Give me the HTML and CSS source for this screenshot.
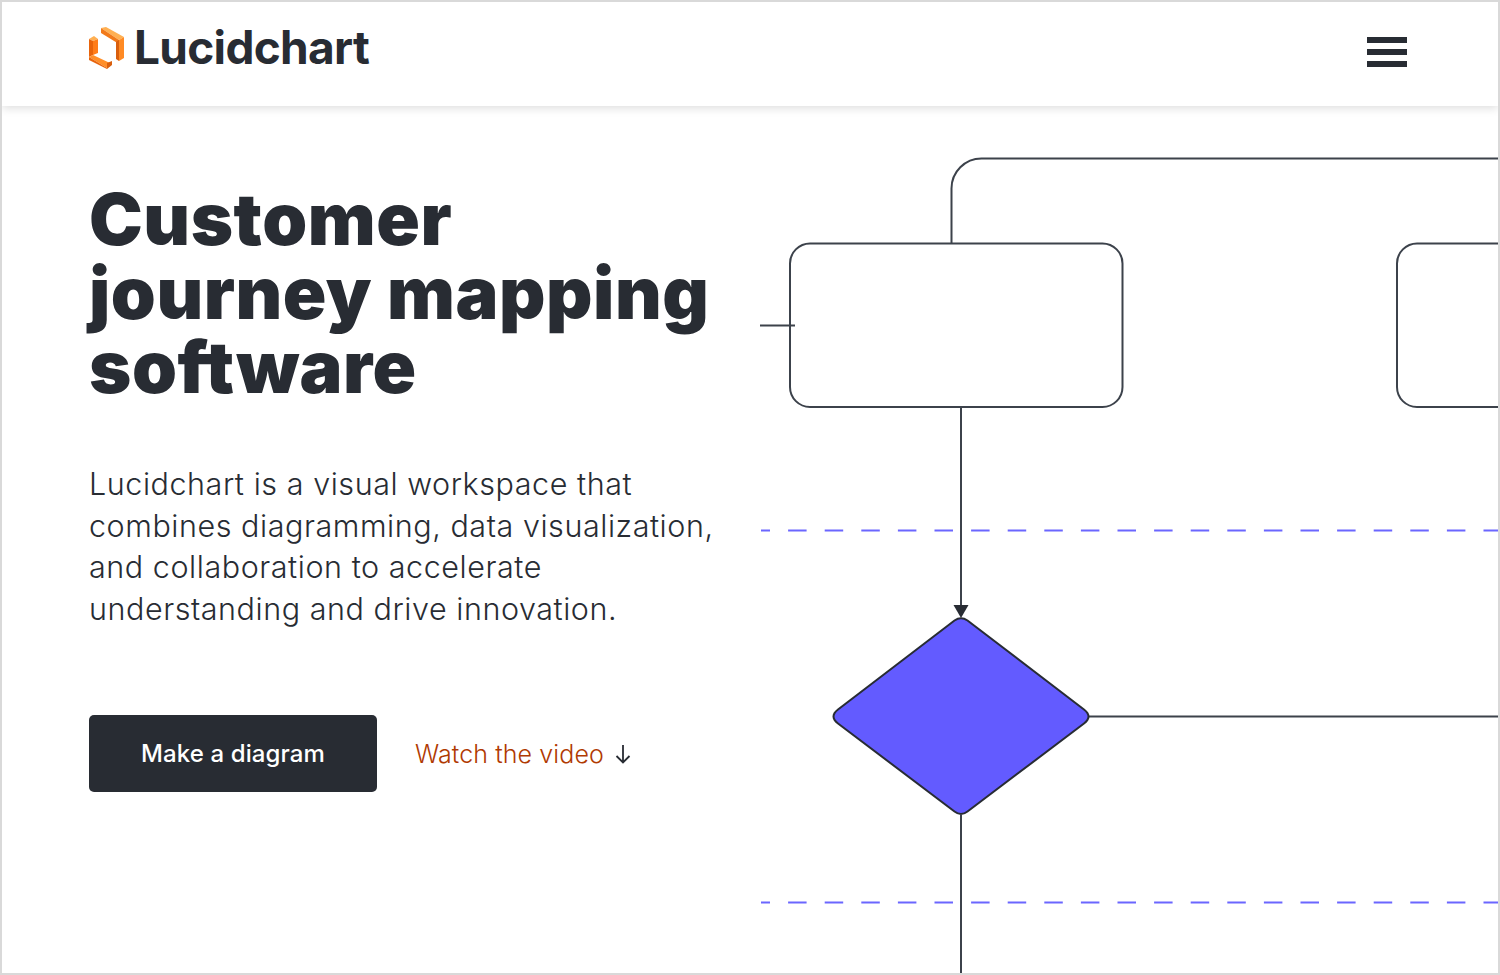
FILE: index.html
```html
<!DOCTYPE html>
<html lang="en">
<head>
<meta charset="utf-8">
<title>Lucidchart</title>
<link rel="stylesheet" href="styles.css">
</head>
<body>
<div class="frame">
  <header class="topbar">
    <a class="brand" href="#">
      <svg class="brand-mark" viewBox="0 0 38 42" width="38" height="42" aria-hidden="true">
        <polygon points="13,1 18,0 36,10 31,13" fill="#ffb052"/>
        <polygon points="13,1 13,6 31,17 31,13" fill="#f27a1a"/>
        <polygon points="31,13 36,10 36,31 31,34" fill="#ff8a24"/>
        <polygon points="31,13 31,34 28,32 28,15" fill="#d95f0e"/>
        <polygon points="1,12 6,9 10,12 5,14" fill="#ffb052"/>
        <polygon points="1,12 5,14 5,28 1,30" fill="#e8640c"/>
        <polygon points="5,14 10,12 10,26 5,28" fill="#ff7d1a"/>
        <polygon points="1,30 5,28 24,37 19,41" fill="#ff8f2a"/>
        <polygon points="1,30 19,41 19,42 1,33" fill="#e8640c"/>
        <polygon points="19,36 24,34 24,38 19,42" fill="#d95f0e"/>
      </svg>
      <span class="brand-name">Lucidchart</span>
    </a>
    <button class="menu" type="button" aria-label="Menu"><span></span><span></span><span></span></button>
  </header>
  <main class="hero">
    <section class="copy">
      <h1>Customer journey&nbsp;mapping software</h1>
      <p>Lucidchart is a visual workspace that combines diagramming, data visualization, and collaboration to accelerate understanding and drive innovation.</p>
      <div class="actions">
        <a class="cta" href="#">Make a diagram</a>
        <a class="video" href="#">Watch the video
          <svg viewBox="0 0 16 20" width="16" height="20" aria-hidden="true"><path d="M8 1v17.500M1.500 12 8 18.500 14.500 12" fill="none" stroke="#282c33" stroke-width="1.800"/></svg>
        </a>
      </div>
    </section>
    <svg class="diagram" viewBox="760 106 738 867" aria-hidden="true">
      <g class="dash">
        <path d="M761 530.500H1498"/>
        <path d="M761 902.500H1498"/>
      </g>
      <g class="wire">
        <path d="M951.500 243V188.500a30 30 0 0 1 30-30H1498"/>
        <path d="M760 325.500H795"/>
        <rect x="790" y="243.500" width="332.500" height="163.500" rx="20"/>
        <path d="M1498 243.500H1417a20 20 0 0 0-20 20V387a20 20 0 0 0 20 20H1498"/>
        <path d="M961 407V610"/>
        <path d="M1089 716.500H1498"/>
        <path d="M961 815V973"/>
      </g>
      <polygon class="tip" points="953.500,605 968.500,605 961,618"/>
      <path class="decision" d="M954.500 620.500Q961 616 967.500 620.500L1084 709.500Q1093 716.500 1084 723.500L967.500 811.500Q961 816.500 954.500 811.500L838 723.500Q829 716.500 838 709.500Z"/>
    </svg>
  </main>
</div>
</body>
</html>
```

FILE: styles.css
```css
* { box-sizing: border-box; }
html, body { margin: 0; height: 100%; background: #fff; }
body { font-family: Inter, "Liberation Sans", sans-serif; color: #282c33; }

.frame {
  width: 1500px;
  height: 975px;
  border: 2px solid #d9d9d9;
  overflow: hidden;
  display: flex;
  flex-direction: column;
}

.topbar {
  flex: none;
  height: 104px;
  display: flex;
  justify-content: space-between;
  align-items: flex-start;
  padding: 0 91px 0 86px;
  background: #fff;
  box-shadow: 0 2px 9px rgba(0, 0, 0, .14);
  position: relative;
}

.brand {
  display: flex;
  align-items: center;
  gap: 8px;
  margin-top: 23px;
  color: #282c33;
  text-decoration: none;
}
.brand-mark { display: block; position: relative; top: 1px; }
.brand-name {
  font-size: 46px;
  font-weight: 700;
  line-height: 44px;
  letter-spacing: -.7px;
}

.menu {
  display: flex;
  flex-direction: column;
  gap: 6px;
  width: 40px;
  margin-top: 35px;
  padding: 0;
  border: 0;
  background: none;
}
.menu span { display: block; height: 6px; background: #282c33; }

.hero {
  flex: 1;
  min-height: 0;
  display: flex;
  justify-content: space-between;
}

.copy { width: 650px; margin-left: 87px; padding-top: 76px; }

h1 {
  margin: 0;
  width: 650px;
  font-size: 72px;
  font-weight: 900;
  line-height: 74px;
  letter-spacing: .55px;
}

.copy p {
  margin: 59px 0 0;
  width: 650px;
  font-size: 30.500px;
  font-weight: 350;
  line-height: 41.500px;
  letter-spacing: .55px;
  color: #282c33;
}

.actions { display: flex; align-items: center; gap: 38px; margin-top: 86px; }

.cta {
  width: 288px;
  height: 77px;
  display: flex;
  align-items: center;
  justify-content: center;
  background: #282c33;
  border-radius: 5px;
  color: #fff;
  font-size: 24px;
  font-weight: 500;
  letter-spacing: .12px;
  text-decoration: none;
}

.video {
  display: flex;
  align-items: center;
  gap: 11px;
  color: #b03a02;
  font-size: 25px;
  font-weight: 350;
  letter-spacing: .1px;
  text-decoration: none;
}

.diagram { flex: none; display: block; width: 738px; height: 867px; }
.wire { fill: none; stroke: #3c424b; stroke-width: 2; }
.dash { fill: none; stroke: #6b66ff; stroke-width: 2; stroke-dasharray: 18.500 18.100; stroke-dashoffset: 9.500; }
.tip { fill: #282c33; }
.decision { fill: #635bff; stroke: #282c33; stroke-width: 2; }
```
